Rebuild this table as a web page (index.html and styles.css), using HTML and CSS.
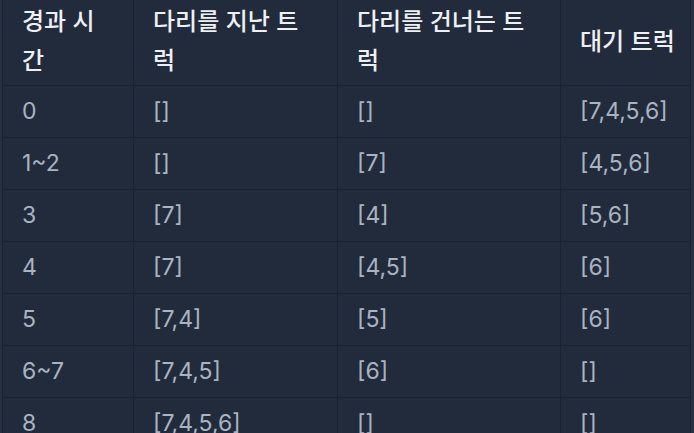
FILE: index.html
```html
<!DOCTYPE html>
<html lang="ko">
<head>
<meta charset="utf-8">
<link rel="stylesheet" href="styles.css">
</head>
<body>
<div class="wrap">
<table class="grid">
<colgroup>
<col class="c1"><col class="c2"><col class="c3"><col class="c4">
</colgroup>
<thead>
<tr><th>경과 시<br>간</th><th>다리를 지난 트<br>럭</th><th>다리를 건너는 트<br>럭</th><th>대기 트럭</th></tr>
</thead>
<tbody>
<tr><td>0</td><td>[]</td><td>[]</td><td>[7,4,5,6]</td></tr>
<tr><td>1~2</td><td>[]</td><td>[7]</td><td>[4,5,6]</td></tr>
<tr><td>3</td><td>[7]</td><td>[4]</td><td>[5,6]</td></tr>
<tr><td>4</td><td>[7]</td><td>[4,5]</td><td>[6]</td></tr>
<tr><td>5</td><td>[7,4]</td><td>[5]</td><td>[6]</td></tr>
<tr><td>6~7</td><td>[7,4,5]</td><td>[6]</td><td>[]</td></tr>
<tr><td>8</td><td>[7,4,5,6]</td><td>[]</td><td>[]</td></tr>
</tbody>
</table>
</div>
</body>
</html>
```
FILE: styles.css
```css
html, body {
  margin: 0;
  padding: 0;
  background: #263041;
}
.wrap {
  padding-left: 2px;
  margin-top: -1px;
}
.grid {
  border-collapse: collapse;
  table-layout: fixed;
  width: 688px;
  background: #222b3c;
  font-family: Inter, "Noto Sans CJK KR", sans-serif;
  font-size: 23px;
}
.c1 { width: 131px; }
.c2 { width: 204px; }
.c3 { width: 223px; }
.c4 { width: 130px; }
.grid th, .grid td {
  border: 1px solid #1a2231;
  text-align: left;
  vertical-align: middle;
  line-height: 39px;
  padding: 6px 2px 6px 19px;
  white-space: nowrap;
}
.grid th {
  color: #eef0f3;
  font-size: 24px;
  font-weight: 500;
  padding-top: 2px;
  padding-bottom: 5px;
}
.grid td {
  color: #a9b3c1;
  font-weight: 400;
}
```
